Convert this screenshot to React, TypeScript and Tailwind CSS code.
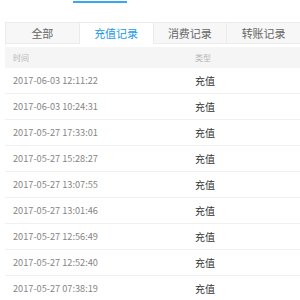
import React, { useState } from 'react';

const tabs = ['全部', '充值记录', '消费记录', '转账记录'];

const records = [
  '2017-06-03 12:11:22',
  '2017-06-03 10:24:31',
  '2017-05-27 17:33:01',
  '2017-05-27 15:28:27',
  '2017-05-27 13:07:55',
  '2017-05-27 13:01:46',
  '2017-05-27 12:56:49',
  '2017-05-27 12:52:40',
  '2017-05-27 07:38:19',
];

export default function App() {
  const [active, setActive] = useState(1);

  return (
    <div className="w-[300px] h-[300px] overflow-hidden bg-white" style={{ fontFamily: '"Noto Sans CJK SC", "Noto Sans", sans-serif' }}>
      {/* top indicator */}
      <div className="h-[22px] pt-[1px]">
        <div className="ml-[73px] w-[54px] h-[2px] bg-[#3aa8f0]" />
      </div>

      <div className="ml-[5px]">
        {/* tabs */}
        <div className="grid grid-cols-4 h-[22px] border-t border-[#ececec]">
          {tabs.map((t, i) => (
            <button
              key={t}
              onClick={() => setActive(i)}
              className={`flex items-center justify-center text-[11px] border-l border-[#ececec] ${
                i === active
                  ? 'bg-white text-[#1a98ec]'
                  : 'bg-[#f7f7f7] text-[#666] border-b'
              }`}
            >
              {t}
            </button>
          ))}
        </div>

        {/* table header */}
        <div className="mt-[3px] h-[21px] bg-[#f5f5f5] flex items-center text-[8px] text-[#b5b5b5]">
          <span className="w-[190px] pl-[8px]">时间</span>
          <span>类型</span>
        </div>

        {/* rows */}
        {records.map((r) => (
          <div key={r} className="h-[26px] flex items-center border-b border-[#f0f0f0]">
            <span className="w-[190px] pl-[8px] text-[9.2px] text-[#858585]">{r}</span>
            <span className="text-[10px] text-[#333]">充值</span>
          </div>
        ))}
      </div>
    </div>
  );
}
